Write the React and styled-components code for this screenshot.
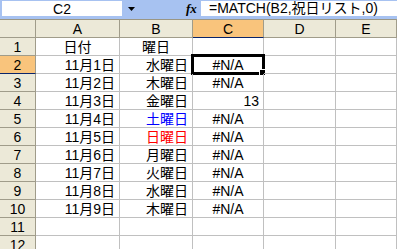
import React from 'react'
import styled, { createGlobalStyle } from 'styled-components'

const GlobalStyle = createGlobalStyle`
  html, body {
    margin: 0;
    padding: 0;
    background: #fff;
    overflow: hidden;
  }
  body {
    font-family: "Liberation Sans", "Noto Sans CJK JP", sans-serif;
    font-size: 14px;
    color: #000;
  }
`

const Sheet = styled.div`
  width: 397px;
  height: 249px;
  overflow: hidden;
`

const FormulaBar = styled.div`
  display: flex;
  align-items: flex-start;
  height: 19px;
  padding-top: 1px;
  box-sizing: border-box;
  background: #a7c2f1;
`

const NameBox = styled.div`
  width: 120px;
  height: 15px;
  margin-left: 2px;
  background: #fff;
  display: flex;
  align-items: center;
  justify-content: center;
  line-height: 1;
`

const DropButton = styled.div`
  width: 18px;
  height: 15px;
  display: flex;
  align-items: center;
  justify-content: center;
`

const Fx = styled.div`
  margin-left: 46px;
  width: 13px;
  height: 15px;
  font-family: "Liberation Serif", serif;
  font-style: italic;
  font-weight: bold;
  font-size: 13px;
  line-height: 15px;
`

const FormulaInput = styled.div`
  flex: 1;
  height: 15px;
  margin-left: 2px;
  padding-left: 8px;
  background: #fff;
  line-height: 15px;
  white-space: nowrap;
`

const Grid = styled.div`
  display: grid;
  grid-template-columns: 36px 84px 73px 71px 72px 1fr;
  grid-template-rows: 19px;
  grid-auto-rows: 18px;
`

const Header = styled.div`
  box-sizing: border-box;
  background: ${p => (p.$active ? '#f9c47c' : '#ece9d8')};
  border-right: 1px solid #a09c8a;
  border-bottom: 1px solid ${p => (p.$active ? '#0a246a' : '#a09c8a')};
  border-top: ${p => (p.$top ? '1px solid #9a9684' : 'none')};
  display: flex;
  align-items: center;
  justify-content: center;
  line-height: 1;
  padding-top: 1px;
`

const Cell = styled.div`
  position: relative;
  box-sizing: border-box;
  border-right: 1px solid #c0c0c0;
  border-bottom: 1px solid #c0c0c0;
  display: flex;
  align-items: center;
  justify-content: ${p =>
    p.$align === 'right' ? 'flex-end' : p.$align === 'center' ? 'center' : 'flex-start'};
  padding: 1px 4px 0;
  color: ${p => p.$color || '#000'};
  white-space: nowrap;
  line-height: 1;
`

const Selection = styled.div`
  position: absolute;
  left: -2px;
  top: -2px;
  width: 74px;
  height: 21px;
  box-sizing: border-box;
  border: 3px solid #000;
  pointer-events: none;
`

const FillHandle = styled.div`
  position: absolute;
  right: -3px;
  bottom: -3px;
  width: 5px;
  height: 5px;
  background: #000;
  outline: 1px solid #fff;
`

const columns = ['A', 'B', 'C', 'D', 'E']

const rows = [
  { a: '日付', aAlign: 'center', b: '曜日', bAlign: 'center' },
  { a: '11月1日', b: '水曜日', c: '#N/A' },
  { a: '11月2日', b: '木曜日', c: '#N/A' },
  { a: '11月3日', b: '金曜日', c: '13', cAlign: 'right' },
  { a: '11月4日', b: '土曜日', c: '#N/A', bColor: '#0000ff' },
  { a: '11月5日', b: '日曜日', c: '#N/A', bColor: '#ff0000' },
  { a: '11月6日', b: '月曜日', c: '#N/A' },
  { a: '11月7日', b: '火曜日', c: '#N/A' },
  { a: '11月8日', b: '水曜日', c: '#N/A' },
  { a: '11月9日', b: '木曜日', c: '#N/A' },
  {},
  {},
]

export default function App() {
  return (
    <Sheet>
      <GlobalStyle />
      <FormulaBar>
        <NameBox>C2</NameBox>
        <DropButton>
          <svg width="7" height="4" viewBox="0 0 7 4">
            <path d="M0 0h7L3.5 4z" fill="#000" />
          </svg>
        </DropButton>
        <Fx>fx</Fx>
        <FormulaInput>=MATCH(B2,祝日リスト,0)</FormulaInput>
      </FormulaBar>
      <Grid>
        <Header $top />
        {columns.map(c => (
          <Header key={c} $top $active={c === 'C'}>{c}</Header>
        ))}
        {rows.map((r, i) => {
          const n = i + 1
          return (
            <React.Fragment key={n}>
              <Header $active={n === 2}>{n}</Header>
              <Cell $align={r.aAlign || 'right'}>{r.a}</Cell>
              <Cell $align={r.bAlign || 'right'} $color={r.bColor}>{r.b}</Cell>
              <Cell $align={r.cAlign || 'center'}>
                {r.c}
                {n === 2 && (
                  <Selection>
                    <FillHandle />
                  </Selection>
                )}
              </Cell>
              <Cell />
              <Cell />
            </React.Fragment>
          )
        })}
      </Grid>
    </Sheet>
  )
}
